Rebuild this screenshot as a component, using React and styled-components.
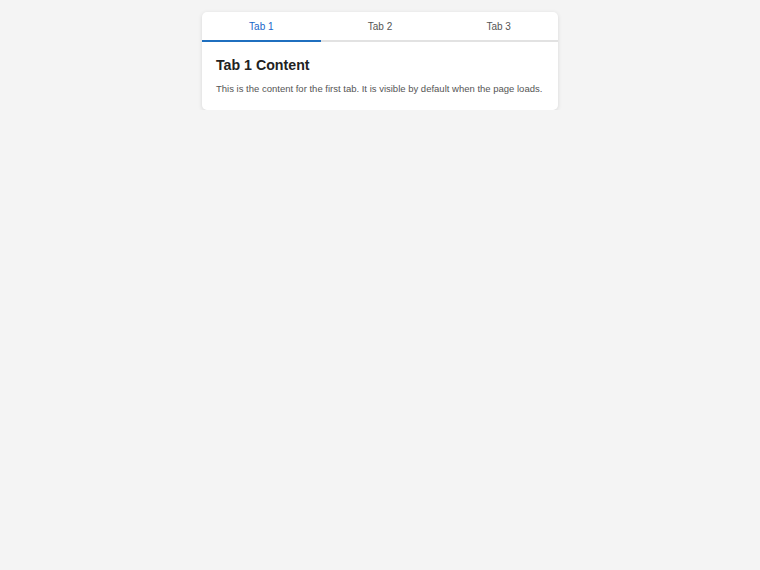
import { useState } from 'react';
import styled, { createGlobalStyle } from 'styled-components';

const GlobalStyle = createGlobalStyle`
  html, body {
    margin: 0;
    background: #f4f4f4;
    font-family: "Liberation Sans", Arial, sans-serif;
  }
`;

const tabs = [
  { id: 1, label: 'Tab 1', title: 'Tab 1 Content', text: 'This is the content for the first tab. It is visible by default when the page loads.' },
  { id: 2, label: 'Tab 2', title: 'Tab 2 Content', text: 'This is the content for the second tab.' },
  { id: 3, label: 'Tab 3', title: 'Tab 3 Content', text: 'This is the content for the third tab.' },
];

export default function App() {
  const [active, setActive] = useState(1);
  const current = tabs.find(t => t.id === active);

  return (
    <Page>
      <GlobalStyle />
      <Card>
        <TabBar>
          {tabs.map(tab => (
            <TabButton key={tab.id} $active={tab.id === active} onClick={() => setActive(tab.id)}>
              {tab.label}
            </TabButton>
          ))}
        </TabBar>
        <Panel>
          <h2>{current.title}</h2>
          <p>{current.text}</p>
        </Panel>
      </Card>
    </Page>
  );
}

const Page = styled.main`
  display: flex;
  justify-content: center;
  padding-top: 12px;
`;

const Card = styled.div`
  width: 356px;
  background: #fff;
  border-radius: 5px;
  box-shadow: 0 1px 4px rgba(0, 0, 0, 0.12);
  overflow: hidden;
`;

const TabBar = styled.div`
  display: flex;
  border-bottom: 2px solid #e2e2e2;
`;

const TabButton = styled.button`
  flex: 1;
  height: 30px;
  margin-bottom: -2px;
  padding: 1px 0 0;
  border: none;
  border-bottom: 2px solid ${p => (p.$active ? '#1f6fbf' : 'transparent')};
  background: none;
  color: ${p => (p.$active ? '#1a66c9' : '#555')};
  font-family: "Liberation Sans", Arial, sans-serif;
  font-size: 10px;
  cursor: pointer;
`;

const Panel = styled.section`
  padding: 15px 14px 14px;

  h2 {
    margin: 0 0 9px;
    font-size: 14.2px;
    font-weight: 700;
    color: #222;
  }

  p {
    margin: 0;
    font-size: 9.5px;
    line-height: 14px;
    color: #555;
  }
`;
